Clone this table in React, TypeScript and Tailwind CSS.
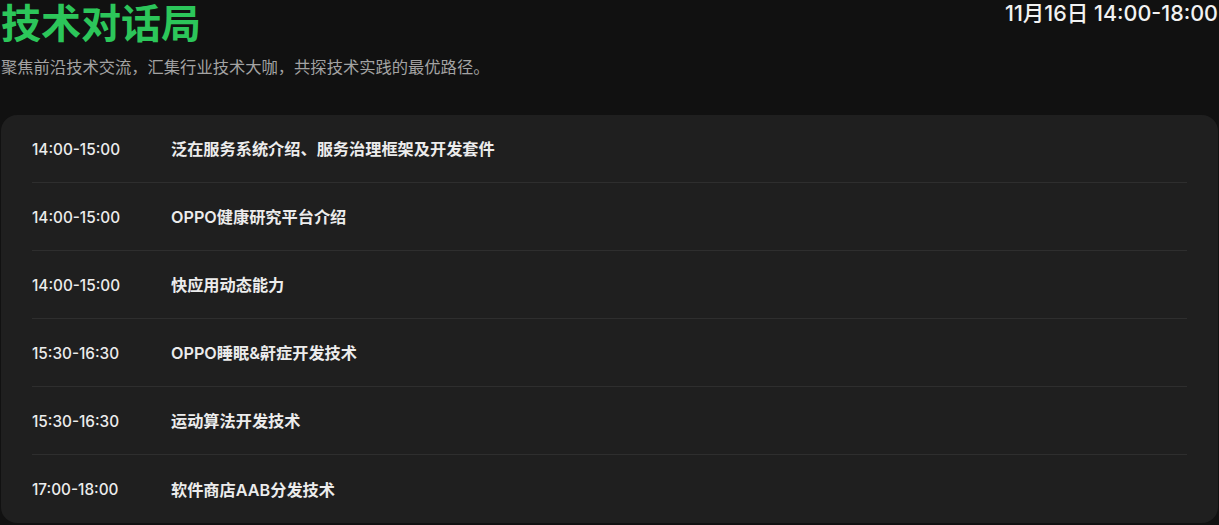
const sessions = [
  { time: '14:00-15:00', title: '泛在服务系统介绍、服务治理框架及开发套件' },
  { time: '14:00-15:00', title: 'OPPO健康研究平台介绍' },
  { time: '14:00-15:00', title: '快应用动态能力' },
  { time: '15:30-16:30', title: 'OPPO睡眠&鼾症开发技术' },
  { time: '15:30-16:30', title: '运动算法开发技术' },
  { time: '17:00-18:00', title: '软件商店AAB分发技术' },
];

export default function App() {
  return (
    <main
      className="min-h-screen bg-[#111111] text-white"
      style={{ fontFamily: 'Inter, "Noto Sans CJK SC", sans-serif' }}
    >
      <div className="px-[1px]">
        {/* Header */}
        <div className="flex items-start justify-between">
          <div>
            <h1 className="pt-[2px] text-[40px] leading-[44px] font-bold text-[#2cc65a]">技术对话局</h1>
            <p className="mt-[9px] text-[16.3px] leading-[24px] text-[#a3a3a3]">
              聚焦前沿技术交流，汇集行业技术大咖，共探技术实践的最优路径。
            </p>
          </div>
          <div className="text-[21.5px] leading-[26px] font-medium text-[#f2f2f2]">11月16日 14:00-18:00</div>
        </div>

        {/* Schedule */}
        <div className="mt-[36px] rounded-2xl bg-[#1f1f1f] px-[31px]">
          {sessions.map((s, i) => (
            <div
              key={i}
              className={`flex h-[68px] items-center ${i < sessions.length - 1 ? 'border-b border-[#2e2e2e]' : ''}`}
            >
              <span className="w-[139px] pt-[2px] text-[15.3px] leading-[24px] font-medium text-[#ececec]">{s.time}</span>
              <span className="pt-[1px] text-[16.2px] leading-[24px] font-semibold text-[#ececec]">{s.title}</span>
            </div>
          ))}
        </div>
      </div>
    </main>
  );
}
